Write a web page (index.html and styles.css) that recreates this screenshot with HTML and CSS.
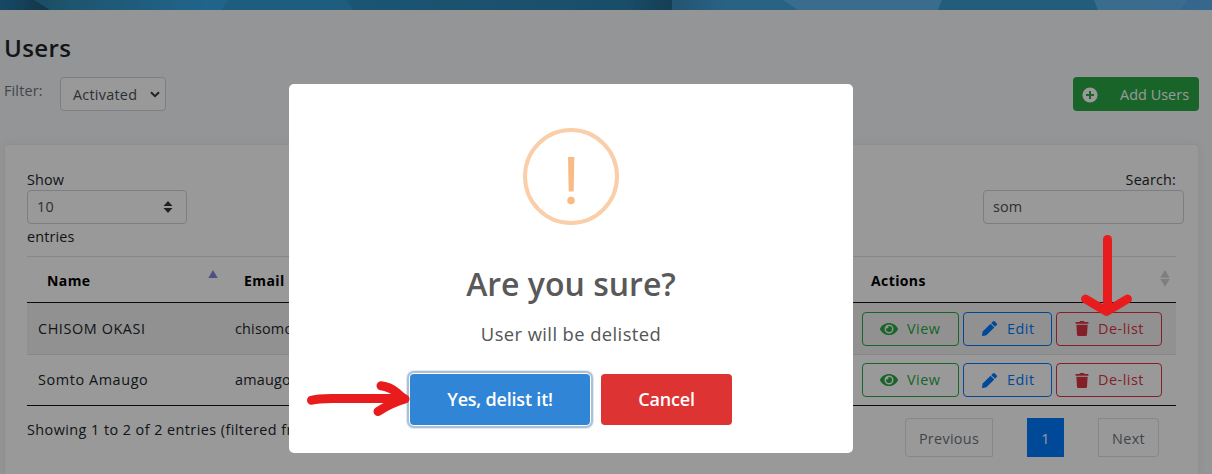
FILE: index.html
```html
<!DOCTYPE html>
<html lang="en">
<head>
<meta charset="utf-8">
<title>Users</title>
<link rel="stylesheet" href="styles.css">
</head>
<body>
<svg class="symbols" aria-hidden="true">
  <symbol id="eye" viewBox="0 0 576 512"><path d="M572.5 241.4C518.3 135.600 410.900 64 288 64S57.700 135.600 3.500 241.400a32.400 32.400 0 0 0 0 29.200C57.700 376.400 165.100 448 288 448s230.300-71.600 284.500-177.400a32.400 32.400 0 0 0 0-29.200zM288 400a144 144 0 1 1 144-144 143.900 143.900 0 0 1-144 144zm0-240a95.300 95.300 0 0 0-25.300 3.800 47.900 47.900 0 0 1-66.900 66.900A95.800 95.800 0 1 0 288 160z"/></symbol>
  <symbol id="pencil" viewBox="0 0 512 512"><path d="M498 142l-46 46c-5 5-13 5-17 0L324 77c-5-5-5-12 0-17l46-46c19-19 49-19 68 0l60 60c19 19 19 49 0 68zM284 100L22 362 0 484c-3 16 12 30 28 28l122-22 262-262c5-5 5-13 0-17L301 100c-4-5-12-5-17 0z"/></symbol>
  <symbol id="trash" viewBox="0 0 448 512"><path d="M432 32H312l-9.400-18.700A24 24 0 0 0 281.100 0H166.800a23.700 23.700 0 0 0-21.400 13.300L136 32H16A16 16 0 0 0 0 48v32a16 16 0 0 0 16 16h416a16 16 0 0 0 16-16V48a16 16 0 0 0-16-16zM53.200 467a48 48 0 0 0 47.900 45h245.800a48 48 0 0 0 47.900-45L416 128H32z"/></symbol>
</svg>

<main class="page">
  <svg class="banner" viewBox="0 0 1212 10" preserveAspectRatio="none" aria-hidden="true">
    <defs>
      <linearGradient id="sky"><stop offset="0" stop-color="#2b7196"/><stop offset=".06" stop-color="#338eb9"/><stop offset=".17" stop-color="#38a8e8"/><stop offset=".28" stop-color="#349fd8"/></linearGradient>
      <linearGradient id="corner"><stop offset="0" stop-color="#277baa"/><stop offset="1" stop-color="#1f5a77"/></linearGradient>
      <linearGradient id="dusk"><stop offset="0" stop-color="#2f8fc0"/><stop offset=".85" stop-color="#2b82b0"/><stop offset="1" stop-color="#22688c"/></linearGradient>
      <linearGradient id="sea"><stop offset="0" stop-color="#3c8dbb"/><stop offset=".1" stop-color="#44a5dc"/><stop offset=".6" stop-color="#42a5df"/><stop offset="1" stop-color="#5cacea"/></linearGradient>
    </defs>
    <rect class="banner-base" width="1212" height="10"/>
    <path class="banner-left" d="M0 0H34L50 10H0z"/>
    <path class="banner-mid" d="M228 0H346L353 10H222z"/>
    <path class="banner-dark" d="M346 0H672V10H353z"/>
    <rect class="banner-right" x="672" width="540" height="10"/>
    <path class="banner-light" d="M783 0H942L938 10H798z"/>
    <path class="banner-deep" d="M942 0H1094L1098 10H938z"/>
    <path class="banner-light" d="M1094 0H1188L1180 10H1098z"/>
  </svg>

  <h1 class="title">Users</h1>
  <div class="toolbar">
    <label class="filter"><span class="filter-label">Filter:</span>
      <span class="control filter-select">Activated
        <svg class="chevron" viewBox="0 0 10 7"><path d="M1 1.200L5 5.200L9 1.200"/></svg>
      </span>
    </label>
    <button class="add"><svg class="plus" viewBox="0 0 16 16"><circle cx="8" cy="8" r="7.600"/><path d="M8 4v8M4 8h8"/></svg><span>Add Users</span></button>
  </div>

  <section class="card">
    <div class="table-tools">
      <div class="length">
        <span class="t-show">Show</span>
        <span class="control length-select">10
          <svg class="updown" viewBox="0 0 10 12"><path d="M5 0L9.500 5H.5zM.5 7h9L5 12z"/></svg>
        </span>
        <span class="t-entries">entries</span>
      </div>
      <div class="search"><span class="t-search">Search:</span><span class="control search-input">som</span></div>
    </div>

    <div class="table">
      <div class="row head">
        <div class="cell"><span>Name</span><svg class="sort sorted" viewBox="0 0 10 17"><path d="M5 0L9.700 8H.3z"/></svg></div>
        <div class="cell"><span>Email</span></div>
        <div class="cell"><span>Actions</span><svg class="sort" viewBox="0 0 10 17"><path d="M5 0L9.700 7.700H.3zM.3 9h9.400L5 16.800z"/></svg></div>
      </div>
      <div class="row odd">
        <div class="cell person">CHISOM OKASI</div>
        <div class="cell mail">chisomo</div>
        <div class="cell actions">
          <button class="btn view"><svg><use href="#eye"/></svg><span>View</span></button>
          <button class="btn edit"><svg><use href="#pencil"/></svg><span>Edit</span></button>
          <button class="btn delist"><svg><use href="#trash"/></svg><span>De-list</span></button>
        </div>
      </div>
      <div class="row last">
        <div class="cell person">Somto Amaugo</div>
        <div class="cell mail">amaugo</div>
        <div class="cell actions">
          <button class="btn view"><svg><use href="#eye"/></svg><span>View</span></button>
          <button class="btn edit"><svg><use href="#pencil"/></svg><span>Edit</span></button>
          <button class="btn delist"><svg><use href="#trash"/></svg><span>De-list</span></button>
        </div>
      </div>
    </div>

    <div class="table-foot">
      <span class="info">Showing 1 to 2 of 2 entries (filtered from</span>
      <nav class="pages"><span class="pg prev">Previous</span><span class="pg current">1</span><span class="pg next">Next</span></nav>
    </div>
  </section>
</main>

<div class="overlay">
  <div class="modal" role="dialog">
    <svg class="warning" viewBox="0 0 96 97"><ellipse cx="48" cy="48.500" rx="46" ry="46.500"/><path d="M45 29h6.300l-.6 34.500h-5zM48 68.700a3.800 3.800 0 1 1 0 7.600a3.800 3.800 0 1 1 0-7.600z"/></svg>
    <h2 class="question">Are you sure?</h2>
    <p class="message">User will be delisted</p>
    <div class="choices"><button class="choice yes">Yes, delist it!</button><button class="choice cancel">Cancel</button></div>
  </div>
</div>

<svg class="arrows" viewBox="0 0 1212 474" aria-hidden="true">
  <path d="M311.500 400.300Q317 398.500 332 398.500H402"/>
  <path d="M381 385.800Q390 387 396.500 392.500Q401 397 405 399Q391 403 378 411.500"/>
  <path d="M1107.500 239.500V307"/>
  <path d="M1085.500 299L1106.500 311.500L1127.500 299"/>
  <path class="arrow-fill" d="M390 394L407 399L388 406zM1099 304h16l-8 10z"/>
</svg>
</body>
</html>
```
FILE: styles.css
```css
* { box-sizing: border-box; }

body {
  margin: 0;
  height: 474px;
  overflow: hidden;
  position: relative;
  background: #f7f8fb;
  color: #212529;
  font: 14.4px/22px "Open Sans", "Noto Sans", sans-serif;
  letter-spacing: .15px;
  white-space: nowrap;
}

button { font: inherit; letter-spacing: inherit; margin: 0; padding: 0; }
.symbols { display: none; }

.page { display: flex; flex-direction: column; height: 474px; overflow: hidden; }

.banner { display: block; width: 1212px; height: 10px; flex: none; }
.banner-base { fill: url(#sky); }
.banner-left { fill: url(#corner); }
.banner-mid { fill: #349cd4; }
.banner-dark { fill: url(#dusk); }
.banner-right { fill: url(#sea); }
.banner-light { fill: #66b8ef; fill-opacity: .8; }
.banner-deep { fill: #3d9ccd; }

.title {
  margin: 20px 0 0 4px;
  font-size: 24px;
  line-height: 36px;
  font-weight: 600;
  letter-spacing: .4px;
}

.toolbar {
  display: flex;
  justify-content: space-between;
  margin: 11px 13px 0 4px;
  height: 34px;
  flex: none;
}
.filter { display: flex; color: #6c757d; }
.filter-label { width: 56px; padding-top: 3px; }

.control {
  display: flex;
  align-items: center;
  justify-content: space-between;
  height: 34px;
  border: 1px solid #ced4da;
  border-radius: 4px;
  background: #fff;
  color: #495057;
}
.filter-select { width: 106px; padding: 1px 5px 0 12px; letter-spacing: .25px; }
.chevron { width: 10px; height: 7px; fill: none; stroke: #343a40; stroke-width: 2; }

.add {
  display: flex;
  align-items: center;
  gap: 22px;
  width: 126px;
  padding: 1px 0 0 9px;
  border: 0;
  border-radius: 4px;
  background: #28a745;
  color: #fff;
  letter-spacing: .05px;
}
.plus { width: 16px; height: 16px; fill: #fff; stroke: #28a745; stroke-width: 2; }
.plus circle { stroke: none; }

.card {
  flex: 1;
  margin: 33px 13px 0 4px;
  padding: 23px 22px 0;
  border: 1px solid #eeeeef;
  border-bottom: 0;
  border-radius: 4px 4px 0 0;
  background: #fff;
  box-shadow: 0 0 10px rgba(0, 0, 0, .05);
}

.table-tools { display: flex; justify-content: space-between; height: 88px; }
.length { display: flex; flex-direction: column; }
.t-show, .t-search { height: 22px; padding-top: 1px; }
.length-select { width: 160px; padding: 0 13px 0 9px; }
.updown { width: 10px; height: 12px; fill: #343a40; }
.t-entries { padding-top: 2px; }
.search { display: flex; flex-direction: column; align-items: flex-end; margin-right: -8px; }
.t-search { margin-right: 8px; }
.search-input { width: 201px; padding-left: 9px; }

.table { width: 1149px; }
.row { display: grid; grid-template-columns: 197px 627px 325px; align-items: center; height: 51px; border-top: 1px solid #dee2e6; color: #000; }
.cell { padding-left: 11px; }
.person { letter-spacing: .6px; }
.mail { letter-spacing: .2px; }
.head { height: 47px; border-bottom: 1px solid #111; font-weight: 700; font-size: 14px; letter-spacing: .4px; }
.head .cell { display: flex; justify-content: space-between; align-items: center; padding: 2px 6px 0 20px; }
.sort { width: 10px; height: 17px; fill: #d3d3d3; margin-top: -5px; }
.sorted { fill: #8484dc; }
.odd { background: #f2f2f2; border-top: 0; color: #212529; }
.last { height: 52px; border-bottom: 1px solid #111; color: #212529; }
.actions { display: flex; gap: 4px; letter-spacing: .5px; }

.btn {
  display: flex;
  align-items: center;
  height: 34px;
  border: 1px solid currentColor;
  border-radius: 4px;
  background: transparent;
}
.btn svg { fill: currentColor; }
.view { width: 97px; padding-left: 17px; gap: 9px; color: #28a745; }
.view svg { width: 18px; height: 16px; }
.edit { width: 89px; padding-left: 18px; gap: 10px; color: #007bff; }
.edit svg { width: 15px; height: 15px; }
.delist { width: 106px; padding-left: 18px; gap: 9px; color: #dc3545; }
.delist svg { width: 14px; height: 15px; }

.table-foot { display: flex; justify-content: space-between; padding: 12px 17px 0 0; }
.info { letter-spacing: .44px; padding-top: 1px; }
.pages { display: flex; letter-spacing: .3px; }
.pg { display: flex; align-items: center; justify-content: center; height: 39px; padding-top: 2px; border: 1px solid #dee2e6; color: #6c757d; }
.prev { width: 88px; border-radius: 4px 0 0 4px; margin-right: 34px; }
.current { width: 37px; border-color: #007bff; background: #007bff; color: #fff; margin-right: 34px; }
.next { width: 61px; border-radius: 0 4px 4px 0; }

.overlay { position: absolute; inset: 0; padding: 84px 0 0 289px; background: rgba(0, 0, 0, .4); }
.modal {
  display: flex;
  flex-direction: column;
  align-items: center;
  width: 564px;
  height: 369px;
  padding-top: 44px;
  border-radius: 5px;
  background: #fff;
}
.warning { width: 96px; height: 97px; }
.warning ellipse { fill: none; stroke: #facea8; stroke-width: 4; }
.warning path { fill: #f8bb86; }
.question { margin: 35px 0 0; font-size: 32px; line-height: 48px; font-weight: 600; letter-spacing: 0; color: #595959; }
.message { margin: 11px 0 0; font-size: 18.4px; line-height: 30px; letter-spacing: .4px; color: #545454; }
.choices { display: flex; gap: 11px; margin-top: 25px; }
.choice { height: 51px; padding-bottom: 2px; border: 0; border-radius: 4px; color: #fff; font-size: 18px; font-weight: 600; letter-spacing: -.2px; }
.yes { width: 180px; background: #3085d6; box-shadow: 0 0 0 1px #fff, 0 0 0 3px #a9c0d6, 0 0 0 4px #e2eaf2; }
.cancel { width: 131px; background: #dd3333; }

.arrows { position: absolute; inset: 0; width: 1212px; height: 474px; fill: none; stroke: #e81c1c; stroke-width: 9; stroke-linecap: round; stroke-linejoin: round; }
.arrow-fill { fill: #e81c1c; stroke: none; }
```
